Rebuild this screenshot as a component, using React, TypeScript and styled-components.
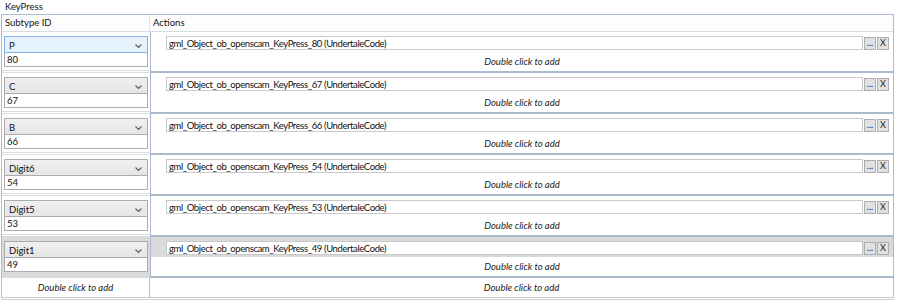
import styled, { createGlobalStyle } from 'styled-components'

const GlobalStyle = createGlobalStyle`
  html, body { margin: 0; padding: 0; background: #fff; }
  body {
    font-family: Lato, "Segoe UI", sans-serif;
    font-size: 9.5px;
    color: #111;
  }
`

type Entry = { key: string; id: number; focused?: boolean; highlighted?: boolean }

const entries: Entry[] = [
  { key: 'P', id: 80, focused: true },
  { key: 'C', id: 67 },
  { key: 'B', id: 66 },
  { key: 'Digit6', id: 54 },
  { key: 'Digit5', id: 53 },
  { key: 'Digit1', id: 49, highlighted: true },
]

const Chevron = () => (
  <svg width="7" height="4" viewBox="0 0 7 4">
    <path d="M0.5 0.5 L3.5 3.5 L6.5 0.5" fill="none" stroke="#606060" strokeWidth="1.1" />
  </svg>
)

export default function App() {
  return (
    <Page>
      <GlobalStyle />
      <Title>KeyPress</Title>
      <Grid>
        <HeaderRow>
          <HeaderCell $divider>Subtype ID</HeaderCell>
          <HeaderCell>Actions</HeaderCell>
        </HeaderRow>
        {entries.map((e) => (
          <Row key={e.id}>
            <SubtypeCell $highlighted={e.highlighted}>
              <Combo $focused={e.focused}>
                <span>{e.key}</span>
                <Chevron />
              </Combo>
              <IdInput>{e.id}</IdInput>
            </SubtypeCell>
            <ActionsCell>
              <ActionItem $highlighted={e.highlighted}>
                <CodeField>gml_Object_ob_openscam_KeyPress_{e.id} (UndertaleCode)</CodeField>
                <SmallButton>...</SmallButton>
                <SmallButton>X</SmallButton>
              </ActionItem>
              <AddRow>Double click to add</AddRow>
            </ActionsCell>
          </Row>
        ))}
        <FooterRow>
          <FooterCell $divider>Double click to add</FooterCell>
          <FooterCell>Double click to add</FooterCell>
        </FooterRow>
      </Grid>
      <BottomEdge />
    </Page>
  )
}

const Page = styled.div`
  width: 900px;
  height: 305px;
  overflow: hidden;
  background: #fff;
`

const Title = styled.div`
  height: 14px;
  line-height: 14px;
  padding-left: 5px;
`

const Grid = styled.div`
  margin-left: 1px;
  width: 891px;
  border: 1px solid #a9bbcd;
  border-bottom-color: #c8c8c8;
`

const HeaderRow = styled.div`
  display: grid;
  grid-template-columns: 148px 1fr;
  height: 16px;
  border-bottom: 1px solid #d5dde6;
  background: #fdfdfd;
`

const HeaderCell = styled.div<{ $divider?: boolean }>`
  padding-left: 3px;
  line-height: 16px;
  border-right: ${(p) => (p.$divider ? '1px solid #dfe4ea' : 'none')};
`

const Row = styled.div`
  display: grid;
  grid-template-columns: 148px 1fr;
  height: 41px;
`

const SubtypeCell = styled.div<{ $highlighted?: boolean }>`
  display: flex;
  flex-direction: column;
  padding: 4px 2px 0 2px;
  background: ${(p) => (p.$highlighted ? '#dadada' : '#fff')};
  border-bottom: 3px double #dcdcdc;
`

const Combo = styled.div<{ $focused?: boolean }>`
  display: flex;
  align-items: center;
  justify-content: space-between;
  height: 17px;
  box-sizing: border-box;
  padding: 2px 5px 0 4px;
  border: 1px solid ${(p) => (p.$focused ? '#7eb4ea' : '#acacac')};
  background: ${(p) => (p.$focused ? '#e5f1fb' : 'linear-gradient(#f0f0f0, #e5e5e5)')};
`

const IdInput = styled.div`
  height: 14px;
  box-sizing: border-box;
  line-height: 13px;
  padding-left: 2px;
  border: 1px solid #abadb3;
  border-top: none;
  background: #fff;
`

const ActionsCell = styled.div`
  display: flex;
  flex-direction: column;
  border-left: 1px solid #a9bbcd;
  border-bottom: 2px solid #a9bbcd;
`

const ActionItem = styled.div<{ $highlighted?: boolean }>`
  display: flex;
  align-items: center;
  gap: 1px;
  height: 20px;
  box-sizing: border-box;
  padding: 4px 4px 2px 15px;
  background: ${(p) => (p.$highlighted ? '#dadada' : '#fff')};
`

const CodeField = styled.div`
  flex: 1;
  height: 14px;
  box-sizing: border-box;
  line-height: 13px;
  padding-left: 2px;
  border: 1px solid #c9c9c9;
  background: #fff;
  white-space: nowrap;
  overflow: hidden;
  letter-spacing: -0.4px;
`

const SmallButton = styled.div`
  width: 12px;
  height: 13px;
  box-sizing: border-box;
  display: flex;
  align-items: center;
  justify-content: center;
  font-size: 9px;
  line-height: 10px;
  border: 1px solid #adadad;
  background: #e1e1e1;
  color: #222;
`

const AddRow = styled.div`
  flex: 1;
  display: flex;
  align-items: center;
  justify-content: center;
  font-style: italic;
  color: #222;
`

const FooterRow = styled.div`
  display: grid;
  grid-template-columns: 148px 1fr;
  height: 19px;
`

const FooterCell = styled.div<{ $divider?: boolean }>`
  display: flex;
  align-items: center;
  justify-content: center;
  font-style: italic;
  color: #222;
  border-right: ${(p) => (p.$divider ? '1px solid #a9bbcd' : 'none')};
`

const BottomEdge = styled.div`
  margin-left: 1px;
  width: 893px;
  height: 1px;
  margin-top: 1px;
  background: #d0d0d0;
`
